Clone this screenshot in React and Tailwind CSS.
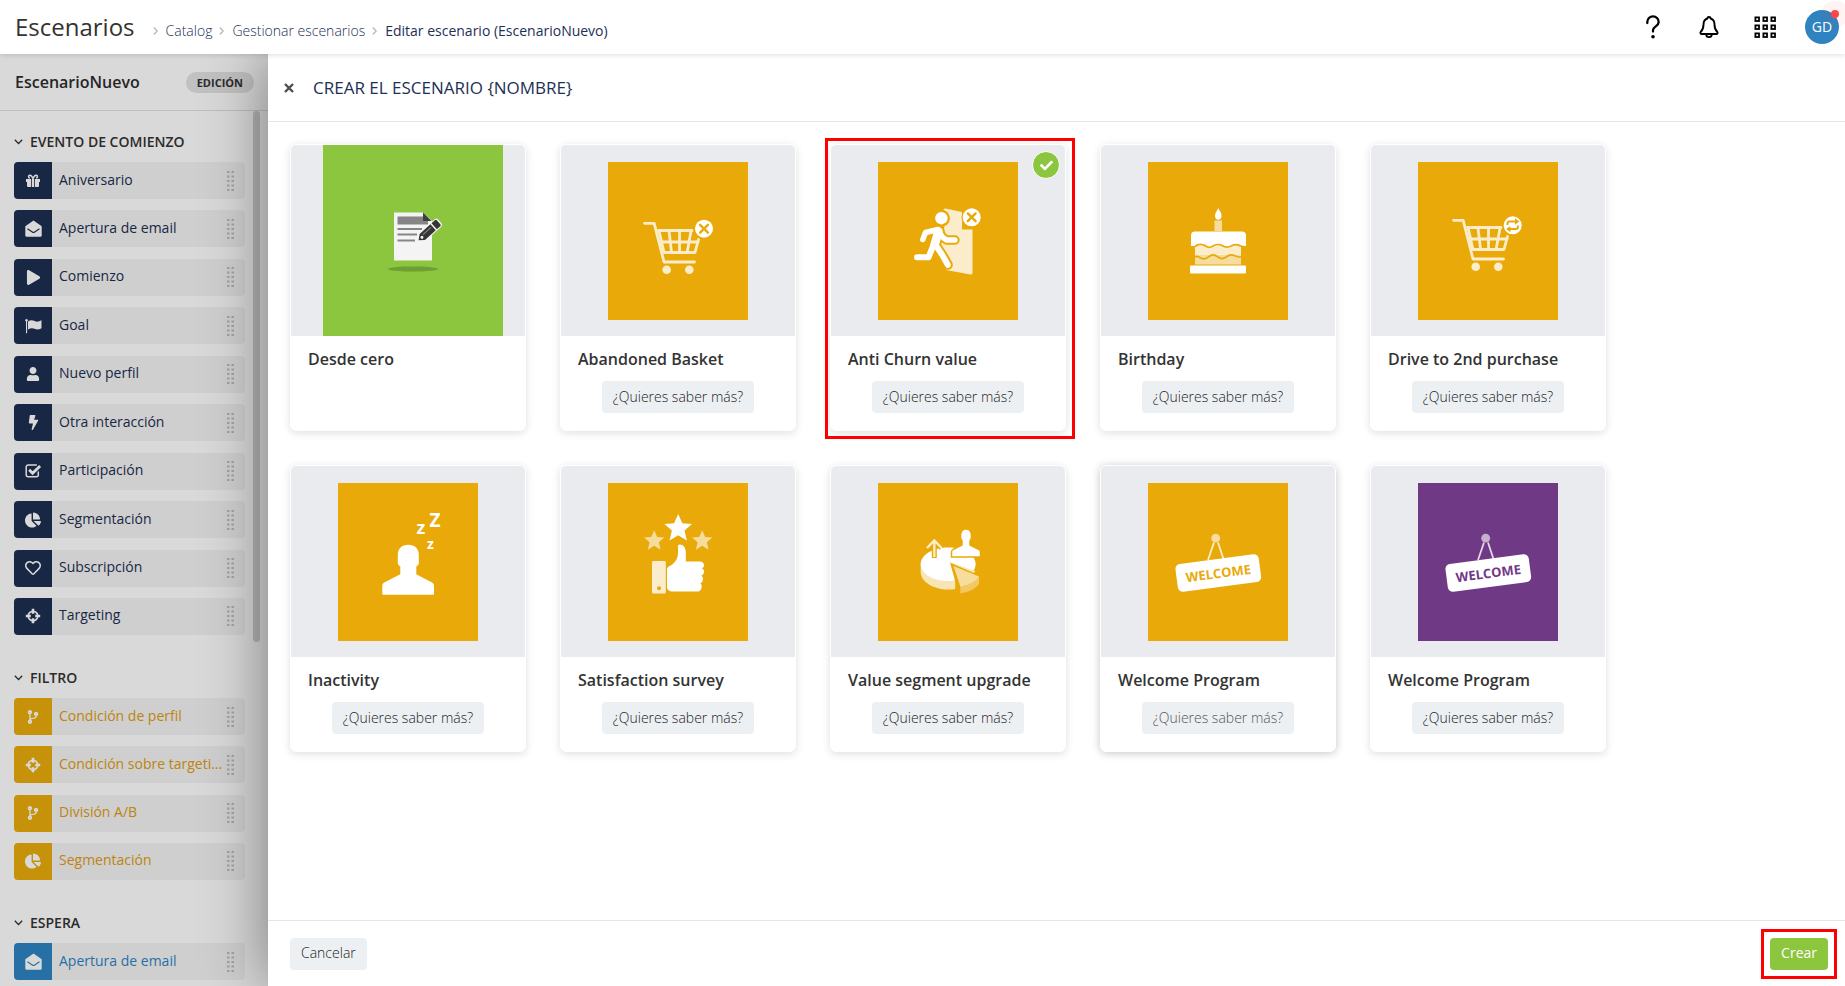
import React from "react";
import { FaCheck, FaPlay, FaBolt, FaUser, FaChartPie, FaRegHeart, FaCodeBranch } from "react-icons/fa";

const GOLD = "#e9aa09";
const PURPLE = "#703985";

/* ---------- Sidebar icons ---------- */

function GiftIcon() {
  return (
    <svg viewBox="0 0 16 16" className="size-4" fill="currentColor" aria-hidden="true">
      <path d="M1 6h5.2v3H1zM9.8 6H15v3H9.8zM7 6h2v8H7zM2 9h4.2v5H3a1 1 0 0 1-1-1zM9.8 9H14v4a1 1 0 0 1-1 1H9.800z" />
      <path d="M8 5.800C7 3 5.600 2 4.600 2.200c-1.400.3-1.400 2.300.1 3.100M8 5.800C9 3 10.400 2 11.400 2.200c1.400.3 1.400 2.300-.1 3.100" fill="none" stroke="currentColor" strokeWidth="1.500" />
    </svg>
  );
}

function EnvelopeIcon() {
  return (
    <svg viewBox="0 0 17 17" className="size-[17px]" fill="currentColor" aria-hidden="true">
      <mask id="envelope-fold">
        <rect width="17" height="17" fill="#fff" />
        <path d="M2.500 8.800 7.300 12q1.200.8 2.400 0l4.800-3.200" fill="none" stroke="#000" strokeWidth="1.100" />
      </mask>
      <path mask="url(#envelope-fold)" d="M.3 6.200 8.500.4l8.200 5.800v9a1.500 1.500 0 0 1-1.500 1.500H1.800A1.500 1.500 0 0 1 .3 15.200z" />
    </svg>
  );
}

function FlagIcon() {
  return (
    <svg viewBox="0 0 17 16" className="h-4 w-[17px]" fill="currentColor" aria-hidden="true">
      <circle cx="1.500" cy="2.200" r="1.200" />
      <path d="M1 2.500h1.100v12.700H1z" />
      <path d="M3 3.400c2.400-1.700 4.600-1.400 6.600-.3 2 1 4.200.8 6.900-.8v7.900c-2.500 1.500-4.700 1.600-6.900.6-2.200-1-4.200-.8-6.600.6z" />
    </svg>
  );
}

function CheckBoxIcon() {
  return (
    <svg viewBox="0 0 17 16" className="h-4 w-[17px]" fill="none" stroke="currentColor" aria-hidden="true">
      <path d="M13.300 9v2.700a2 2 0 0 1-2 2H3.200a2 2 0 0 1-2-2V4a2 2 0 0 1 2-2h8.100" strokeWidth="1.500" strokeLinecap="round" />
      <path d="m4.200 6.800 3.400 3.500 7.500-7.400" strokeWidth="2.800" />
    </svg>
  );
}

function TargetIcon() {
  return (
    <svg viewBox="0 0 16 16" className="size-4" fill="none" stroke="currentColor" aria-hidden="true">
      <circle cx="8" cy="8" r="4.700" strokeWidth="1.800" />
      <path d="M8 .8v5M8 10.200v5M.8 8h5M10.200 8h5" strokeWidth="2.600" />
    </svg>
  );
}

function Grip() {
  return (
    <svg viewBox="0 0 7 20" className="h-5 w-[7px] shrink-0 fill-[#a3a3a3]" aria-hidden="true">
      {[0, 4.500].map((x) => [0, 4.500, 9, 13.500, 18].map((y) => <rect key={x + "-" + y} x={x} y={y} width="2.500" height="2" />))}
    </svg>
  );
}

const small = "size-[14px]";
const icons = {
  gift: <GiftIcon />,
  mail: <EnvelopeIcon />,
  play: <FaPlay className="size-[15px]" />,
  flag: <FlagIcon />,
  user: <FaUser className={small} />,
  bolt: <FaBolt className="size-[15px]" />,
  check: <CheckBoxIcon />,
  pie: <FaChartPie className="size-4" />,
  heart: <FaRegHeart className="size-4" />,
  target: <TargetIcon />,
  branch: <FaCodeBranch className={small} />,
};

const sections = [
  {
    title: "EVENTO DE COMIENZO",
    list: "min-h-[473px]",
    box: "bg-[#172744]",
    text: "text-[#172744]",
    items: [
      ["gift", "Aniversario"],
      ["mail", "Apertura de email"],
      ["play", "Comienzo"],
      ["flag", "Goal"],
      ["user", "Nuevo perfil"],
      ["bolt", "Otra interacción"],
      ["check", "Participación"],
      ["pie", "Segmentación"],
      ["heart", "Subscripción"],
      ["target", "Targeting"],
    ],
  },
  {
    title: "FILTRO",
    list: "min-h-[182px]",
    box: "bg-[#c59209]",
    text: "text-[#bd8410]",
    items: [
      ["branch", "Condición de perfil"],
      ["target", "Condición sobre targeti..."],
      ["branch", "División A/B"],
      ["pie", "Segmentación"],
    ],
  },
  {
    title: "ESPERA",
    list: "",
    box: "bg-[#2770a6]",
    text: "text-[#2770a6]",
    items: [["mail", "Apertura de email"]],
  },
];

/* ---------- Card artwork, drawn on a 140 x 158 tile ---------- */

function Tile({ color, children }) {
  return (
    <svg viewBox="0 0 140 158" className="h-[158px] w-[140px]" aria-hidden="true">
      <rect width="140" height="158" fill={color} />
      {children}
    </svg>
  );
}

function CrossBadge({ x, y }) {
  return (
    <g transform={`translate(${x} ${y})`}>
      <circle r="10.200" fill={GOLD} />
      <circle r="9" fill="#fff" />
      <path d="m-3.900-3.900 7.800 7.800m0-7.800-7.800 7.800" stroke={GOLD} strokeWidth="2.400" strokeLinecap="round" />
    </g>
  );
}

function Cart() {
  return (
    <>
      <g fill="none" stroke="#fbedcb" strokeWidth="2.800" strokeLinecap="round" strokeLinejoin="round">
        <path d="M36.500 61.300h9.700L56 100h30.500" />
        <path d="M50.500 68.500H84M51 68.500l5 22h31l3.500-13" />
        <path d="M53.500 80H90M61 69l2.500 21M71.500 69v21M83 69l-3.800 21" />
      </g>
      <g fill="#fbedcb">
        <circle cx="58.700" cy="107.700" r="4.300" />
        <circle cx="81.300" cy="107.700" r="4.300" />
      </g>
    </>
  );
}

function PageArt() {
  return (
    <svg viewBox="0 0 180 191" className="h-[191px] w-[180px]" aria-hidden="true">
      <rect width="180" height="191" fill="#8cc63e" />
      <ellipse cx="90" cy="124" rx="25" ry="2.600" fill="#6f9e33" />
      <path d="M71 67.500h29l9 8.500v39.500H71z" fill="#f4f4f4" />
      <path d="M74.500 71.500H100V76h5v3.500H74.500z" fill="#858585" />
      <path d="M100 67.500 108.500 76H100z" fill="#3f3f3f" />
      <path d="M74.500 84H99M74.500 89.500H94M74.500 95.500H92" stroke="#858585" strokeWidth="1.800" />
      <g transform="translate(106 86) rotate(-42)">
        <path d="M-15 0-10-5H12a2.500 2.500 0 0 1 2.500 2.500v5A2.500 2.500 0 0 1 12 5h-22z" fill="#f4f4f4" />
        <path d="m-14 0 5-4H5.500v8H-9zM7-4h4.500a1.500 1.500 0 0 1 1.500 1.500v5A1.500 1.500 0 0 1 11.500 4H7z" fill="#353535" />
        <path d="M-7-1.300H4" stroke="#8a8a8a" strokeWidth="1" />
        <circle cx="-9.500" cy="0" r="1.500" fill="#f4f4f4" />
      </g>
    </svg>
  );
}

function BasketArt() {
  return (
    <Tile color={GOLD}>
      <Cart />
      <CrossBadge x={96} y={66.7} />
    </Tile>
  );
}

function RunnerShape({ stroke, extra }) {
  return (
    <g fill="none" stroke={stroke} strokeLinecap="round" strokeLinejoin="round">
      <path d="M44.800 77.500 47.500 70.500 60 67.500" strokeWidth={5.4 + extra} />
      <path d="M60 68.500 65 75.500l3.500 2.500h8.500" strokeWidth={5.4 + extra} />
      <path d="M60.500 69.500 56.500 83" strokeWidth={8.600 + extra} />
      <path d="M55.500 83 50.500 95.300H39" strokeWidth={6 + extra} />
      <path d="M57.500 83 64 92.500 69.800 102.800" strokeWidth={6 + extra} />
    </g>
  );
}

function RunnerArt() {
  return (
    <Tile color={GOLD}>
      <path d="M65.500 47.500q1.500-1.500 3-.8L84 50v17.500h10.500V111q0 1.800-2 1.500L68 108l2-8-8-18 5-20z" fill="#fbedcb" />
      <circle cx="63.400" cy="56.200" r="8.500" fill={GOLD} />
      <RunnerShape stroke={GOLD} extra={4} />
      <circle cx="63.400" cy="56.200" r="6.200" fill="#fff" />
      <RunnerShape stroke="#fff" extra={0} />
      <CrossBadge x={93.7} y={55.3} />
    </Tile>
  );
}

function CakeArt() {
  return (
    <Tile color={GOLD}>
      <path d="M70.300 46c1.500 3 3.300 5.300 3.300 8 0 2.300-1.500 3.800-3.300 3.800S67 56.300 67 54c0-2.700 1.800-5 3.300-8z" fill="#fff" />
      <rect x="66.500" y="58.500" width="7.500" height="10.500" fill="#f6dd9d" />
      <rect x="47" y="80" width="46" height="14" fill="#fbedcb" />
      <rect x="47" y="93" width="46" height="9.500" fill="#f6dd9d" />
      <path d="M43 84V73.500a4 4 0 0 1 4-4h47a4 4 0 0 1 4 4V84l-4.500-.5c-4-2.500-6-1.500-9 .5s-5 1.500-8-.5-5-1.800-8 .3-5 1.500-8-.6-6-1.200-9 .8z" fill="#fff" />
      <path d="M47 84.500c3-2.500 6-3.200 10-.7s5 2 8.500 0 5.500-2 9 0 5.500 2 9 0 6-2 9.500.5M47 95c3-2.200 5 1.800 9 1.800s5-4 9-4 5 3.800 9 3.800 5-3.800 9-3.800 6 3.200 10 2" fill="none" stroke={GOLD} strokeWidth="1.700" />
      <rect x="42" y="103.500" width="56" height="8" rx="1" fill="#fff" />
    </Tile>
  );
}

function RepeatCartArt() {
  return (
    <Tile color={GOLD}>
      <g transform="translate(-1 -3)">
        <Cart />
      </g>
      <circle cx="94.700" cy="63.300" r="10.200" fill={GOLD} />
      <circle cx="94.700" cy="63.300" r="9" fill="#fff" />
      <g fill="none" stroke={GOLD} strokeWidth="2">
        <path d="M89.500 63v-1.500q0-2 2-2h6M99.900 63.600v1.500q0 2-2 2h-6" />
      </g>
      <path d="m97 56.300 4.300 3.200-4.300 3.200zM92.400 63.900l-4.300 3.200 4.300 3.200z" fill={GOLD} />
    </Tile>
  );
}

function SleepArt() {
  return (
    <Tile color={GOLD}>
      <path d="M70.300 61.700c6.500 0 10.500 4 10.500 10V80c0 1.700-1 2.500-2.500 3.500v7.700l16.200 8.500q1.500 1 1.500 2.500v9.500H44.300v-9.500q0-1.500 1.500-2.500L62.300 91.200v-7.700c-1.500-1-2.500-1.800-2.500-3.500v-8.300c0-6 4-10 10.500-10z" fill="#fff" />
      <g fill="#fff" textAnchor="middle" className="font-['Open_Sans',sans-serif] font-bold">
        <text x="97" y="44" fontSize="19">Z</text>
        <text x="83" y="51" fontSize="18">z</text>
        <text x="92.500" y="65.500" fontSize="14">z</text>
      </g>
    </Tile>
  );
}

const star = "M0-14 4.100-4.700 13.800-4 6.300 2.500 8.700 12.500 0 7.200-8.700 12.500-6.300 2.500-13.800-4-4.100-4.700z";

function SurveyArt() {
  return (
    <Tile color={GOLD}>
      <path d={star} transform="translate(70.200 45)" fill="#fff" />
      <path d={star} transform="translate(46.200 57.500) scale(.73)" fill="#f6dd9d" />
      <path d={star} transform="translate(94.200 57.500) scale(.73)" fill="#f6dd9d" />
      <path d="M45.500 78h11q1.300 0 1.300 1.300V109q0 1.500-1.300 1.500h-11q-1.500 0-1.500-1.500V79.300Q44 78 45.500 78z" fill="#fbedcb" />
      <circle cx="51" cy="105.300" r="2" fill={GOLD} />
      <path d="M59 86q0-1.500 1.500-2.300C66 81 69.800 77 70 70v-7q0-1.500 1.500-1.500c4 0 6.300 3.500 6.300 8v9H92c5 0 5 5.800 1.800 7 3.300.5 3 6.500-.8 7.200 3 .8 2.500 6.800-.8 7.500 2.500.8 2 8.300-2.500 8.300H65c-4 0-6-1.500-6-5z" fill="#fff" />
    </Tile>
  );
}

function PieArt() {
  return (
    <Tile color={GOLD}>
      <path d="M42.700 81v8c0 9.500 12 17.500 27.500 17.500q4 0 7-.5v-8z" fill="#f8e5b5" />
      <path d="M72 79.500 77 97.500q-3.300.5-6.800.5c-15.200 0-27.500-7.500-27.500-16.800S55 64.500 70.200 64.500s27.500 7.300 27.500 16.500q0 4-2.500 7z" fill="#fff" />
      <path d="M71 79.500 97.500 88l-2 2z" fill="#f8e5b5" />
      <path d="M75 82.500 101 93.500q-4 7-18.700 10z" fill="#f6dd9d" stroke={GOLD} strokeWidth="2.400" strokeLinejoin="round" />
      <path d="M82.300 103v7.500q14-2.500 18.700-9.500v-7.500z" fill="#f1c862" />
      <path d="M75.500 83 101 93.500q-4 7-18.700 10z" fill="#f6dd9d" />
      <path d="M73.500 74v-5q0-1.500 1.500-2.500l9-4.500v-4c-2.500-3-2.500-12 4-12s6.500 9 4 12v4l9 4.500q1.500 1 1.500 2.500v5z" fill="#fff" stroke={GOLD} strokeWidth="1.500" />
      <path d="M56.300 75V58.500M49 65l7.300-7.500 7.300 7.500" fill="none" stroke={GOLD} strokeWidth="5" />
      <path d="M56.300 74V58.500M49 65l7.300-7.500 7.300 7.500" fill="none" stroke="#fbedcb" strokeWidth="2.400" />
    </Tile>
  );
}

function WelcomeArt({ color, soft, softer }) {
  return (
    <Tile color={color}>
      <path d="M66 59.500 60 77M70 59.500 75.500 76" stroke={soft} strokeWidth="1.800" />
      <circle cx="67.700" cy="55.200" r="4.400" fill={softer} />
      <g transform="translate(70.300 90) rotate(-7.500)">
        <rect x="-42" y="-14" width="84" height="28" rx="5" fill="#fff" />
        <text y="5" fontSize="13" textAnchor="middle" fill={color} className="font-['Open_Sans',sans-serif] font-bold">
          WELCOME
        </text>
      </g>
    </Tile>
  );
}

const cards = [
  { title: "Desde cero", art: <PageArt />, plain: true },
  { title: "Abandoned Basket", art: <BasketArt /> },
  { title: "Anti Churn value", art: <RunnerArt />, selected: true },
  { title: "Birthday", art: <CakeArt /> },
  { title: "Drive to 2nd purchase", art: <RepeatCartArt /> },
  { title: "Inactivity", art: <SleepArt /> },
  { title: "Satisfaction survey", art: <SurveyArt /> },
  { title: "Value segment upgrade", art: <PieArt /> },
  { title: "Welcome Program", art: <WelcomeArt color={GOLD} soft="#fbedcb" softer="#f6dd9d" />, raised: true },
  { title: "Welcome Program", art: <WelcomeArt color={PURPLE} soft="#e2d7e7" softer="#c6b0ce" /> },
];

function Card({ title, art, plain, selected, raised }) {
  return (
    <li
      className={
        "relative flex min-h-[287px] flex-col rounded-md border border-white bg-white " +
        (raised ? "shadow-[0_1px_8px_rgba(0,0,0,0.24)]" : "shadow-[0_2px_8px_rgba(0,0,0,0.13)]")
      }
    >
      <div className={"flex h-[191px] justify-center overflow-hidden rounded-t-[5px] bg-[#eaebef] " + (plain ? "items-start pl-[10px]" : "items-center")}>{art}</div>
      <h3 className="mt-[11px] px-[17px] text-base leading-6 font-semibold text-[#333]">{title}</h3>
      {!plain && (
        <button type="button" className={"mt-[10px] h-8 self-center rounded bg-[#edf0f3] px-[11px] text-sm font-light " + (raised ? "text-[#555]" : "text-[#222]")}>
          ¿Quieres saber más?
        </button>
      )}
      {selected && (
        <>
          <span className="absolute top-[6px] right-[5px] flex size-7 items-center justify-center rounded-full border border-white bg-[#8cc63e] text-white">
            <FaCheck className="size-[13px]" />
          </span>
          <span className="pointer-events-none absolute -top-[7px] -right-[10px] -bottom-[9px] -left-[6px] border-3 border-[#f00]" />
        </>
      )}
    </li>
  );
}

function Crumb({ children }) {
  return (
    <li className="flex items-center gap-2">
      <svg viewBox="0 0 5 8" className="h-2 w-[5px]" fill="none" stroke="#b4b4b4" strokeWidth="1.200" aria-hidden="true">
        <path d="m.8.5 3.400 3.500L.8 7.500" />
      </svg>
      {children}
    </li>
  );
}

function TopBar() {
  return (
    <header className="relative z-20 flex h-[54px] shrink-0 items-center bg-white pr-[6px] pl-[15px] shadow-[0_1px_5px_rgba(0,0,0,0.14)]">
      <h1 className="text-2xl leading-[52px] text-[#333]">Escenarios</h1>
      <nav aria-label="Ruta" className="mt-[8px] ml-[18px]">
        <ol className="flex gap-[7px] text-sm leading-5 text-[#1d3055]">
          <Crumb><a href="#catalog" className="font-light">Catalog</a></Crumb>
          <Crumb><a href="#escenarios" className="font-light">Gestionar escenarios</a></Crumb>
          <Crumb><span className="font-medium">Editar escenario (EscenarioNuevo)</span></Crumb>
        </ol>
      </nav>
      <div className="ml-auto flex items-center text-black">
        <button type="button" aria-label="Ayuda" className="flex w-14 justify-center">
          <svg viewBox="0 0 16 24" className="h-6 w-4" fill="none" stroke="currentColor" strokeWidth="2.300" strokeLinecap="round" aria-hidden="true">
            <path d="M2.300 8V7a5.700 5.700 0 0 1 11.400 0c0 4.200-5.700 4.400-5.700 8.200v1.300" />
            <circle cx="8" cy="21.700" r=".9" fill="currentColor" strokeWidth="1.800" />
          </svg>
        </button>
        <button type="button" aria-label="Notificaciones" className="flex w-14 justify-center">
          <svg viewBox="0 0 20 24" className="h-6 w-5" fill="none" stroke="currentColor" strokeWidth="1.900" strokeLinejoin="round" aria-hidden="true">
            <path d="M10 2c-1.200 0-1.600.8-1.700 1.500C5.500 4.500 4.500 6.800 4.500 9.500c0 4-.8 5.500-2.700 7.300-.8 1-.3 2.200.9 2.200h14.600c1.200 0 1.700-1.200.9-2.200-1.900-1.800-2.700-3.300-2.700-7.300 0-2.700-1-5-3.800-6C11.600 2.800 11.200 2 10 2z" />
            <path d="M7.200 19.500c.2 3.500 5.400 3.500 5.600 0" />
          </svg>
        </button>
        <button type="button" aria-label="Aplicaciones" className="flex w-14 justify-center">
          <svg viewBox="0 0 22 23" className="h-[23px] w-[22px]" fill="none" stroke="currentColor" strokeWidth="1.800" aria-hidden="true">
            {[1.400, 9.400, 17.400].map((x) => [1.400, 9.400, 17.400].map((y) => <rect key={x + "-" + y} x={x} y={y} width="3.600" height="3.600" />))}
          </svg>
        </button>
        <button type="button" aria-label="Cuenta" className="relative ml-3 flex size-[34px] items-center justify-center rounded-full bg-[#2f83c0] text-sm text-white">
          GD
          <span className="absolute top-0 right-0 size-2 rounded-full bg-[#ff4646] shadow-[0_0_0_9px_rgba(255,70,70,0.06)]" />
        </button>
      </div>
    </header>
  );
}

function Sidebar() {
  return (
    <aside className="relative flex w-[268px] shrink-0 flex-col overflow-hidden bg-[#d9d9d9]">
      <div className="flex h-[57px] shrink-0 items-center justify-between border-b border-[#bdbdbd] pr-[14px] pl-[15px]">
        <h2 className="text-base font-semibold text-[#262626]">EscenarioNuevo</h2>
        <span className="rounded-full bg-[#c1c1c1] px-[11px] text-[11px] leading-[21px] font-bold text-[#2b2b2b]">EDICIÓN</span>
      </div>
      <div className="relative min-h-0 flex-1 overflow-hidden pt-[21px] pr-[23px] pl-[14px]">
        <span className="absolute top-0 right-2 h-[531px] w-[7px] rounded-full bg-[#b4b4b4]" />
        {sections.map((s) => (
          <section key={s.title} className="mb-[33px]">
            <button type="button" className="mb-[10px] flex items-center gap-[7px] text-sm leading-5 font-semibold text-[#2b2b2b]">
              <svg viewBox="0 0 9 6" className="h-[6px] w-[9px]" fill="none" stroke="currentColor" strokeWidth="1.300" aria-hidden="true">
                <path d="m.8.8 3.700 3.700L8.200.8" />
              </svg>
              {s.title}
            </button>
            <ul className={"flex flex-col justify-between " + s.list}>
              {s.items.map(([icon, label]) => (
                <li key={label} className="flex h-[37px] items-center overflow-hidden rounded bg-[#cfcfcf] pr-[11px]">
                  <span className={"flex h-full w-[38px] shrink-0 items-center justify-center text-[#d9d9d9] " + s.box}>{icons[icon]}</span>
                  <span className={"ml-[7px] min-w-0 flex-1 pb-[2px] text-sm font-medium whitespace-nowrap " + s.text}>{label}</span>
                  <Grip />
                </li>
              ))}
            </ul>
          </section>
        ))}
      </div>
    </aside>
  );
}

export default function App() {
  return (
    <div className="flex h-screen flex-col overflow-hidden bg-white font-['Open_Sans',sans-serif]">
      <TopBar />
      <div className="flex min-h-0 flex-1">
        <Sidebar />
        <main className="relative z-10 flex min-w-0 flex-1 flex-col bg-white shadow-[0_0_60px_rgba(0,0,0,0.46)]">
          <div className="flex h-[68px] shrink-0 items-center border-b border-[#e5e5e5] pl-4">
            <button type="button" aria-label="Cerrar" className="text-[#4d4d4d]">
              <svg viewBox="0 0 10 10" className="size-[10px]" stroke="currentColor" strokeWidth="2.400" aria-hidden="true">
                <path d="m1 1 8 8M9 1 1 9" />
              </svg>
            </button>
            <h2 className="ml-[19px] text-[17px] font-medium text-[#1d3055]">CREAR EL ESCENARIO {"{NOMBRE}"}</h2>
          </div>
          <ul className="grid min-h-0 flex-1 grid-cols-[repeat(auto-fill,236px)] content-start gap-[34px] overflow-hidden px-[22px] pt-[22px]">
            {cards.map((c, i) => (
              <Card key={i} {...c} />
            ))}
          </ul>
          <footer className="flex h-[66px] shrink-0 items-center justify-between border-t border-[#e5e5e5] pr-[17px] pl-[22px]">
            <button type="button" className="h-8 rounded bg-[#edf0f3] px-[11px] pb-[2px] text-sm font-light text-[#222]">Cancelar</button>
            <div className="relative">
              <button type="button" className="block h-8 rounded bg-[#8cc63e] px-[11px] pb-[2px] text-sm text-white">Crear</button>
              <span className="pointer-events-none absolute -inset-[9px] border-3 border-[#f00]" />
            </div>
          </footer>
        </main>
      </div>
    </div>
  );
}
